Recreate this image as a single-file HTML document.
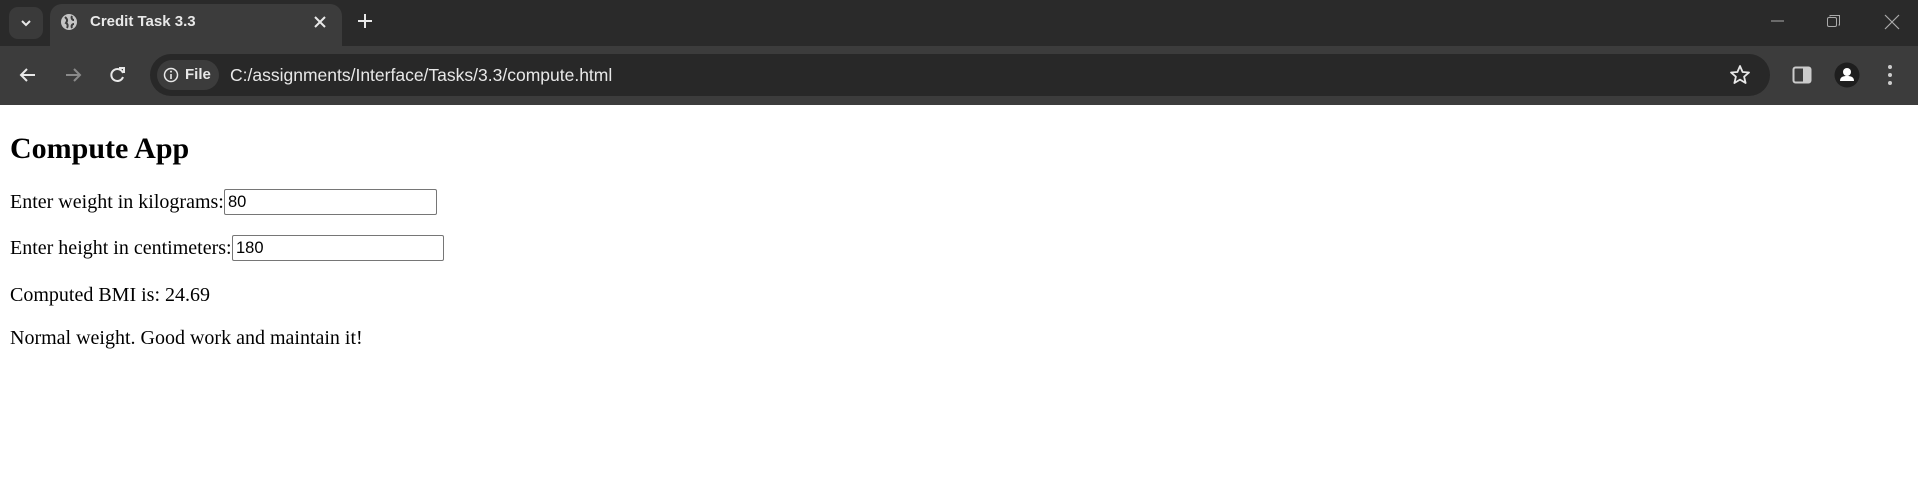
<!DOCTYPE html>
<html><head><meta charset="utf-8"><style>
*{margin:0;padding:0;box-sizing:border-box}
body{width:1918px;height:490px;background:#fff;position:relative;overflow:hidden;font-family:"Liberation Serif",serif}
.strip{position:absolute;left:0;top:0;width:1918px;height:46px;background:#2a2a2a}
.toolbar{position:absolute;left:0;top:46px;width:1918px;height:59px;background:#3c3c3c}
.tab{position:absolute;left:50px;top:4px;width:292px;height:46px;background:#3c3c3c;border-radius:12px 12px 0 0}
.ui{position:absolute;font-family:"Liberation Sans",sans-serif;color:#e8e8e8}
.omni{position:absolute;left:150px;top:54px;width:1620px;height:42px;background:#282828;border-radius:21px}
.chip{position:absolute;left:157px;top:60px;width:62px;height:30px;background:#3c3c3c;border-radius:15px}
.t{position:absolute;left:10px;font-size:20px;color:#000;white-space:nowrap}
input{position:absolute;height:26px;border:1px solid #767676;border-radius:2px;font:16.5px "Liberation Sans",sans-serif;padding-left:3px;color:#000;background:#fff}
</style></head><body>
<div class="strip"></div>
<div class="ui" style="left:9px;top:7px;width:34px;height:32px;background:#3a3a3a;border-radius:9px"></div>
<svg class="ui" style="left:18px;top:16px" width="16" height="14"><path d="M4 5l4 4 4-4" stroke="#e8e8e8" stroke-width="2" fill="none"/></svg>
<div class="tab"></div>
<svg class="ui" style="left:60px;top:13px" width="18" height="18"><circle cx="9" cy="9" r="8" fill="#c4c4c4"/><path d="M5 4c2 2 3 3 1 6 2 1 2 3 1 5M12 3c-1 2 0 4 2 4M14 11c-2 0-3 2-2 4" stroke="#3c3c3c" stroke-width="2" fill="none"/></svg>
<div class="ui" style="left:90px;top:13px;font-size:15px;font-weight:bold">Credit Task 3.3</div>
<svg class="ui" style="left:313px;top:15px" width="14" height="14"><path d="M2 2l10 10M12 2L2 12" stroke="#e8e8e8" stroke-width="2"/></svg>
<svg class="ui" style="left:357px;top:13px" width="16" height="16"><path d="M8 1v14M1 8h14" stroke="#e8e8e8" stroke-width="2"/></svg>
<svg class="ui" style="left:1770px;top:15px" width="20" height="14"><path d="M1 6h13" stroke="#aaa" stroke-width="1"/></svg>
<svg class="ui" style="left:1826px;top:13px" width="16" height="16"><rect x="1.5" y="4.5" width="9" height="9" rx="1.5" stroke="#aaa" fill="none"/><path d="M4 3.5V2.5h9.5V12h-1" stroke="#aaa" fill="none"/></svg>
<svg class="ui" style="left:1884px;top:14px" width="16" height="16"><path d="M1 1l14 14M15 1L1 15" stroke="#aaa" stroke-width="1.2"/></svg>
<div class="toolbar"></div>
<svg class="ui" style="left:18px;top:66px" width="20" height="18"><path d="M17 9H3M9 3L3 9l6 6" stroke="#e8e8e8" stroke-width="2" fill="none"/></svg>
<svg class="ui" style="left:63px;top:66px" width="20" height="18"><path d="M3 9h14M11 3l6 6-6 6" stroke="#8a8a8a" stroke-width="2" fill="none"/></svg>
<svg class="ui" style="left:108px;top:65px" width="20" height="20"><path d="M15 8A6 6 0 1 0 15 12" stroke="#e8e8e8" stroke-width="2" fill="none"/><path d="M11 3h5v5" stroke="#e8e8e8" stroke-width="2" fill="none"/></svg>
<div class="omni"></div>
<div class="chip"></div>
<svg class="ui" style="left:163px;top:67px" width="16" height="16"><circle cx="8" cy="8" r="6.5" stroke="#e8e8e8" stroke-width="1.5" fill="none"/><path d="M8 7v5" stroke="#e8e8e8" stroke-width="1.6"/><circle cx="8" cy="4.6" r="1" fill="#e8e8e8"/></svg>
<div class="ui" style="left:185px;top:66px;font-size:15px;font-weight:bold">File</div>
<div class="ui" style="left:230px;top:65px;font-size:17.5px">C:/assignments/Interface/Tasks/3.3/compute.html</div>
<svg class="ui" style="left:1729px;top:64px" width="22" height="22"><path d="M11 2l2.6 6 6.4.5-4.9 4.2 1.5 6.3L11 15.6 5.4 19l1.5-6.3L2 8.5 8.4 8z" stroke="#e8e8e8" stroke-width="1.8" fill="none" stroke-linejoin="round"/></svg>
<svg class="ui" style="left:1792px;top:65px" width="20" height="20"><rect x="1.5" y="2.5" width="17" height="15" rx="2" stroke="#ccc" stroke-width="2" fill="none"/><rect x="11" y="3" width="7" height="14" fill="#ccc"/></svg>
<svg class="ui" style="left:1834px;top:62px" width="26" height="26"><circle cx="13" cy="13" r="12.5" fill="#1e1e1e"/><circle cx="13" cy="10" r="4" fill="#fff"/><path d="M6 19c0-4 3-5 7-5s7 1 7 5z" fill="#fff"/></svg>
<svg class="ui" style="left:1886px;top:64px" width="8" height="22"><circle cx="4" cy="3" r="2" fill="#ccc"/><circle cx="4" cy="11" r="2" fill="#ccc"/><circle cx="4" cy="19" r="2" fill="#ccc"/></svg>

<div class="t" style="top:132px;font-size:30px;font-weight:bold">Compute App</div>
<div class="t" style="top:191px">Enter weight in kilograms:</div>
<input style="left:224px;top:189px;width:213px" value="80">
<div class="t" style="top:237px">Enter height in centimeters:</div>
<input style="left:232px;top:235px;width:212px" value="180">
<div class="t" style="top:284px">Computed BMI is: 24.69</div>
<div class="t" style="top:327px">Normal weight. Good work and maintain it!</div>
</body></html>
